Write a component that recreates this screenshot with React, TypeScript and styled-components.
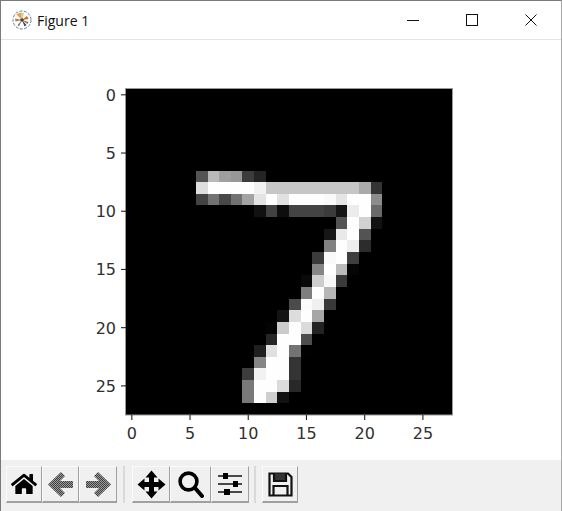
import React from 'react';
import styled, { createGlobalStyle } from 'styled-components';
import { FaHome } from 'react-icons/fa';

const GlobalStyle = createGlobalStyle`
  html, body {
    margin: 0;
    padding: 0;
    background: #ffffff;
  }
`;

const Window = styled.div`
  width: 562px;
  height: 511px;
  box-sizing: border-box;
  display: flex;
  flex-direction: column;
  overflow: hidden;
  background: #ffffff;
  border-top: 1px solid #7a7a7a;
  border-left: 1px solid #7a7a7a;
  border-right: 1px solid #a8a8a8;
`;

const TitleBar = styled.header`
  height: 38px;
  flex: none;
  display: flex;
  align-items: center;
  padding-left: 11px;
  border-bottom: 1px solid #e4e4e4;
`;

const Title = styled.span`
  margin-left: 5px;
  font-family: 'Open Sans', 'Liberation Sans', sans-serif;
  font-size: 14px;
  color: #111111;
`;

const WindowControls = styled.div`
  margin-left: auto;
  margin-right: 1px;
  display: flex;
`;

const ControlButton = styled.div`
  width: 59px;
  height: 38px;
  display: flex;
  align-items: center;
  justify-content: center;
`;

const Canvas = styled.main`
  flex: 1;
  min-height: 0;
  padding: 41px 0 0 95px;
`;

const Toolbar = styled.nav`
  height: 51px;
  flex: none;
  box-sizing: border-box;
  display: flex;
  align-items: flex-start;
  padding: 6px 0 0 5px;
  background: #f0f0f0;
`;

const ToolButton = styled.div<{ $width: number }>`
  width: ${p => p.$width}px;
  height: 37px;
  box-sizing: border-box;
  display: flex;
  align-items: center;
  justify-content: center;
  background: #f0f0f0;
  border-top: 1px solid #fafafa;
  border-left: 1px solid #fafafa;
  border-right: 1px solid #a0a0a0;
  border-bottom: 2px solid #a0a0a0;
`;

const Separator = styled.div<{ $left: number; $right: number }>`
  width: 2px;
  height: 37px;
  margin: 0 ${p => p.$right}px 0 ${p => p.$left}px;
  background: #d9d9d9;
`;

const TickLabel = styled.text`
  font-family: 'DejaVu Sans', sans-serif;
  font-size: 16px;
  fill: #303030;
`;

const Digit = styled.g`
  filter: blur(0.6px);
  shape-rendering: crispEdges;
`;

// first MNIST test digit: [row, first column, ...values]
const DIGIT: number[][] = [
  [7, 6, 84, 185, 159, 151, 60, 36],
  [8, 6, 222, 254, 254, 254, 254, 241, 198, 198, 198, 198, 198, 198, 198, 198, 170, 52],
  [9, 6, 67, 114, 72, 114, 163, 227, 254, 225, 254, 254, 254, 250, 229, 254, 254, 140],
  [10, 11, 17, 66, 14, 67, 67, 67, 59, 21, 236, 254, 106],
  [11, 18, 83, 253, 209, 18],
  [12, 17, 22, 233, 255, 83],
  [13, 17, 129, 254, 238, 44],
  [14, 16, 59, 249, 254, 62],
  [15, 16, 133, 254, 187, 5],
  [16, 15, 9, 205, 248, 58],
  [17, 15, 126, 254, 182],
  [18, 14, 75, 251, 240, 57],
  [19, 13, 19, 221, 254, 166],
  [20, 12, 3, 203, 254, 219, 35],
  [21, 12, 38, 254, 254, 77],
  [22, 11, 31, 224, 254, 115, 1],
  [23, 11, 133, 254, 254, 52],
  [24, 10, 61, 242, 254, 254, 52],
  [25, 10, 121, 254, 254, 219, 40],
  [26, 10, 121, 254, 207, 18],
];

const TICKS = [0, 5, 10, 15, 20, 25];
const AX_X = 30;
const AX_Y = 8;
const AX_SIZE = 326;
const CELL = AX_SIZE / 28;

const tickPos = (v: number) => (v + 0.5) * CELL;

const DigitPlot: React.FC = () => (
  <svg width={370} height={370} style={{ display: 'block' }}>
    <g transform={`translate(${AX_X} ${AX_Y})`}>
      <rect x={-0.5} y={-0.5} width={AX_SIZE + 1} height={AX_SIZE + 0.5} fill="#000" stroke="#999" strokeWidth={1} />
      <Digit>
        {DIGIT.map(([row, start, ...values]) =>
          values.map((v, i) => (
            <rect
              key={`${row}-${i}`}
              x={(start + i) * CELL}
              y={row * CELL}
              width={CELL}
              height={CELL}
              fill={`rgb(${v},${v},${v})`}
            />
          )),
        )}
      </Digit>
      {TICKS.map(t => (
        <g key={t}>
          <line x1={-5} x2={0} y1={tickPos(t)} y2={tickPos(t)} stroke="#222" strokeWidth={1.1} />
          <TickLabel x={-10} y={tickPos(t) + 6} textAnchor="end">{t}</TickLabel>
          <line y1={AX_SIZE} y2={AX_SIZE + 5} x1={tickPos(t)} x2={tickPos(t)} stroke="#222" strokeWidth={1.1} />
          <TickLabel x={tickPos(t)} y={AX_SIZE + 24} textAnchor="middle">{t}</TickLabel>
        </g>
      ))}
    </g>
  </svg>
);

const Logo: React.FC = () => (
  <svg width={20} height={20} viewBox="0 0 20 20">
    <circle cx={10} cy={10} r={9} fill="#fff" stroke="#5f7f92" strokeWidth={1} strokeDasharray="3 1.4" />
    <path d="M10 10 L4.5 4.5 A8 8 0 0 1 9 2.5 Z" fill="#e8a33c" />
    <path d="M10 10 L9 2.5 A8 8 0 0 1 12 3 Z" fill="#c9c9a0" />
    <path d="M10 10 L15 6 A8 8 0 0 1 16.5 9 Z" fill="#d2691e" />
    <path d="M10 10 L3 8.5 L3.5 11.5 Z" fill="#c96f4a" />
    <path d="M10 10 L14.5 15 L12.5 16.5 Z" fill="#444" />
    <path d="M10 10 L7 16.5 L5.5 15 Z" fill="#6f7f8a" />
    <path d="M10 10 L16.5 12 L15.5 14 Z" fill="#777" />
    <circle cx={10} cy={10} r={1.8} fill="#444" />
  </svg>
);

const ArrowIcon: React.FC<{ flip?: boolean }> = ({ flip }) => {
  const id = flip ? 'ditherR' : 'ditherL';
  return (
    <svg width={27} height={27} viewBox="0 0 27 27">
      <defs>
        <pattern id={id} width={2} height={2} patternUnits="userSpaceOnUse">
          <rect width={2} height={2} fill="#9a9a9a" />
          <rect width={1} height={1} fill="#404040" />
          <rect x={1} y={1} width={1} height={1} fill="#404040" />
        </pattern>
      </defs>
      <path
        d="M14 1 L18 5 L13 10 H26 V17 H13 L18 22 L14 26 L1 13.5 Z"
        transform={flip ? 'matrix(-1 0 0 1 27 0)' : undefined}
        fill={`url(#${id})`}
      />
    </svg>
  );
};

const MoveIcon: React.FC = () => (
  <svg width={29} height={29} viewBox="0 0 29 29" fill="#000">
    <path d="M14.5 0.5 L20.5 7.5 H17 V12 H21.5 V8.5 L28.5 14.5 L21.5 20.5 V17 H17 V21.5 H20.5 L14.5 28.5 L8.5 21.5 H12 V17 H7.5 V20.5 L0.5 14.5 L7.5 8.5 V12 H12 V7.5 H8.5 Z" />
  </svg>
);

const SearchIcon: React.FC = () => (
  <svg width={26} height={27} viewBox="0 0 26 27" fill="none" stroke="#000">
    <circle cx={10.5} cy={10.5} r={8.4} strokeWidth={3.6} />
    <path d="M17 17 L24 25" strokeWidth={4} strokeLinecap="round" />
  </svg>
);

const SlidersIcon: React.FC = () => (
  <svg width={24} height={24} viewBox="0 0 24 24">
    <path d="M0 4 H24 M0 12 H24 M0 20 H24" stroke="#111" strokeWidth={1.6} />
    <rect x={5} y={1} width={5} height={6} fill="#000" />
    <rect x={15} y={9} width={5} height={6} fill="#000" />
    <rect x={6} y={17} width={6} height={6} fill="#000" />
  </svg>
);

const SaveIcon: React.FC = () => (
  <svg width={25} height={25} viewBox="0 0 25 25" fill="none" stroke="#111" strokeWidth={2.2}>
    <path d="M1.5 1.5 H20 L23.5 5 V23.5 H1.5 Z" />
    <path d="M6 1.5 V9 H18 V1.5" fill="#333" />
    <path d="M5.5 23.5 V14 H19.5 V23.5" />
  </svg>
);

const App: React.FC = () => (
  <>
    <GlobalStyle />
    <Window>
      <TitleBar>
        <Logo />
        <Title>Figure 1</Title>
        <WindowControls>
          <ControlButton>
            <svg width={12} height={12} viewBox="0 0 12 12"><path d="M0 6.5 H12" stroke="#111" /></svg>
          </ControlButton>
          <ControlButton>
            <svg width={12} height={12} viewBox="0 0 12 12"><rect x={0.5} y={0.5} width={11} height={11} fill="none" stroke="#111" /></svg>
          </ControlButton>
          <ControlButton>
            <svg width={12} height={12} viewBox="0 0 12 12"><path d="M0.5 0.5 L11.5 11.5 M11.5 0.5 L0.5 11.5" stroke="#111" /></svg>
          </ControlButton>
        </WindowControls>
      </TitleBar>
      <Canvas>
        <DigitPlot />
      </Canvas>
      <Toolbar>
        <ToolButton $width={36}><FaHome size={26} color="#000" /></ToolButton>
        <ToolButton $width={37}><ArrowIcon /></ToolButton>
        <ToolButton $width={38}><ArrowIcon flip /></ToolButton>
        <Separator $left={6} $right={7} />
        <ToolButton $width={38}><MoveIcon /></ToolButton>
        <ToolButton $width={41}><SearchIcon /></ToolButton>
        <ToolButton $width={38}><SlidersIcon /></ToolButton>
        <Separator $left={5} $right={6} />
        <ToolButton $width={36}><SaveIcon /></ToolButton>
      </Toolbar>
    </Window>
  </>
);

export default App;
